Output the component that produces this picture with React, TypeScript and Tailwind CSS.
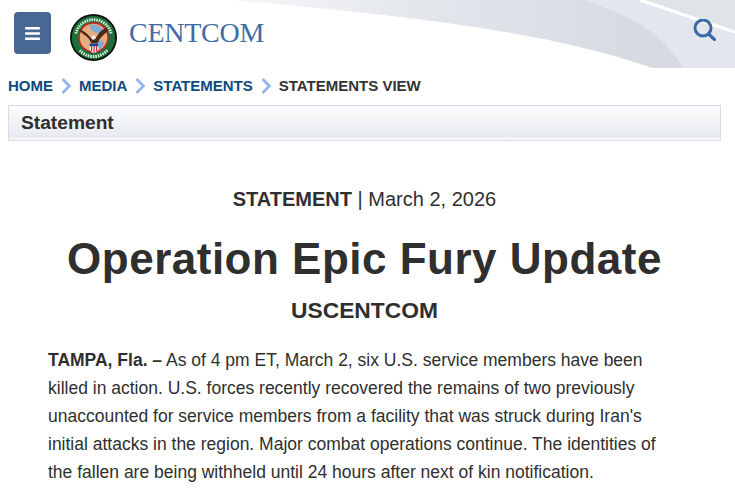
import { FaBars } from "react-icons/fa";

function Seal() {
  return (
    <svg width="47" height="47" viewBox="0 0 48 48" className="shrink-0">
      <circle cx="24" cy="24" r="24" fill="#0b100c" />
      <circle cx="24" cy="24" r="22.200" fill="#1c6e3a" />
      <circle cx="24" cy="24" r="15.500" fill="#d3201f" />
      <circle cx="24" cy="24" r="14" fill="#e6ad7d" />
      <path d="M20 11c5-1 11 1 14 6-3 3-7 3-10 1l-3-3z" fill="#7fa9d6" />
      <path d="M22 28c4-2 10-1 13 1-1 4-4 7-7 8l-6-1z" fill="#7fa9d6" />
      <path d="M8 15c4 1 9 4 12 8l3 3 3-1 2-3c2-4 6-7 11-9l1 3c-3 3-7 6-10 10l-2 4h-6l-3-5c-3-3-7-6-11-9z" fill="#4a2a17" />
      <circle cx="24" cy="24" r="2.200" fill="#f4efe6" />
      <path d="M20 30h9v5c0 3-2.500 4-4.500 5-2-1-4.500-2-4.500-5z" fill="#f6f6f6" />
      <path d="M20 30h9v3h-9z" fill="#24418c" />
      <path d="M21.500 33h1.200v5h-1.200zM24 33h1.200v6.500h-1.200zM26.500 33h1.200v5h-1.200z" fill="#c8202c" />
      <path d="M6 20a18.500 18.500 0 0 1 36 0" fill="none" stroke="#d8efd8" strokeWidth="3" strokeDasharray="1.600 .9" />
      <path d="M10 37a18.500 18.500 0 0 0 28 0" fill="none" stroke="#d8efd8" strokeWidth="3" strokeDasharray="1.600 .9" />
    </svg>
  );
}

function Chevron() {
  return (
    <svg width="12" height="16" viewBox="0 0 12 16" className="mx-[7px] shrink-0">
      <path d="M2.500 1 9.500 8 2.500 15" fill="none" stroke="#8fb4ee" strokeWidth="2.600" />
    </svg>
  );
}

function SearchIcon() {
  return (
    <svg width="23" height="22" viewBox="0 0 23 22" className="relative mt-[7px] shrink-0">
      <circle cx="10" cy="9" r="8" fill="none" stroke="#3c6aa5" strokeWidth="3" />
      <path d="M15.500 15 21.500 20.500" fill="none" stroke="#3c6aa5" strokeWidth="3.200" strokeLinecap="round" />
    </svg>
  );
}

export default function App() {
  return (
    <div className="h-[492px] w-[735px] overflow-hidden bg-white font-['Liberation_Sans',sans-serif] text-[#2f2f2f]">
      <header className="relative flex h-[68px] items-start justify-between overflow-hidden pl-[14px] pr-[19px] pt-[12px]">
        <svg className="absolute inset-0" width="735" height="68" viewBox="0 0 735 68">
          <defs>
            <linearGradient id="swoosh" x1="230" y1="0" x2="640" y2="0" gradientUnits="userSpaceOnUse">
              <stop offset="0" stopColor="#f6f7f9" />
              <stop offset="0.5" stopColor="#e2e5ea" />
              <stop offset="1" stopColor="#d7dbe1" />
            </linearGradient>
          </defs>
          <path d="M735 0H640L735 32V68H684C670 45 650 28 633 20C618 12 600 5 585 0z" fill="#e3e7ed" />
          <path d="M640 0H735V32z" fill="#e1e4e7" />
          <path d="M640 0 735 32" stroke="#fff" strokeWidth="3" fill="none" />
          <path d="M230 0C290 5 340 10 400 17C450 23 490 29 533 37C575 45 615 55 652 68H684C670 45 650 28 633 20C618 12 600 5 585 0z" fill="url(#swoosh)" />
        </svg>
        <div className="relative flex items-start">
          <button className="flex h-[42px] w-[37px] items-center justify-center rounded-[4px] bg-[#486792] text-white">
            <FaBars size={17} />
          </button>
          <div className="ml-[19px] mt-[2px]">
            <Seal />
          </div>
          <span className="ml-[12px] mt-[4px] font-['Liberation_Serif',serif] text-[28px] leading-[34px] tracking-[-0.25px] text-[#3f6da3]">
            CENTCOM
          </span>
        </div>
        <SearchIcon />
      </header>

      <nav className="flex h-[36px] items-center pl-[8px] text-[15px] font-bold text-[#0c4a80]">
        <span>HOME</span>
        <Chevron />
        <span>MEDIA</span>
        <Chevron />
        <span>STATEMENTS</span>
        <Chevron />
        <span className="text-[#333]">STATEMENTS VIEW</span>
      </nav>

      <div className="ml-[8px] mt-[1px] h-[36px] w-[713px] border border-[#d8dce4] bg-gradient-to-b from-[#fafbfc] to-[#e6e9ee] pl-[12px] text-[19.2px] font-bold leading-[34px] shadow-[inset_0_-2px_0_#f5f6f8]">
        Statement
      </div>

      <main className="pl-[48px] pr-[54px] pt-[45px]">
        <p className="text-center text-[20px] leading-[26px]">
          <strong>STATEMENT</strong> | March 2, 2026
        </p>
        <h1 className="mt-[22px] text-center text-[44px] font-bold leading-[50px] tracking-[0.5px]">
          Operation Epic Fury Update
        </h1>
        <h2 className="mt-[12px] text-center text-[22.8px] font-bold leading-[28px]">USCENTCOM</h2>
        <p className="mt-[22px] text-[17.5px] leading-[28px]">
          <strong>TAMPA, Fla. –</strong> As of 4 pm ET, March 2, six U.S. service members have been killed in action.
          U.S. forces recently recovered the remains of two previously unaccounted for service members from a facility
          that was struck during Iran's initial attacks in the region. Major combat operations continue. The identities
          of the fallen are being withheld until 24 hours after next of kin notification.
        </p>
      </main>
    </div>
  );
}
